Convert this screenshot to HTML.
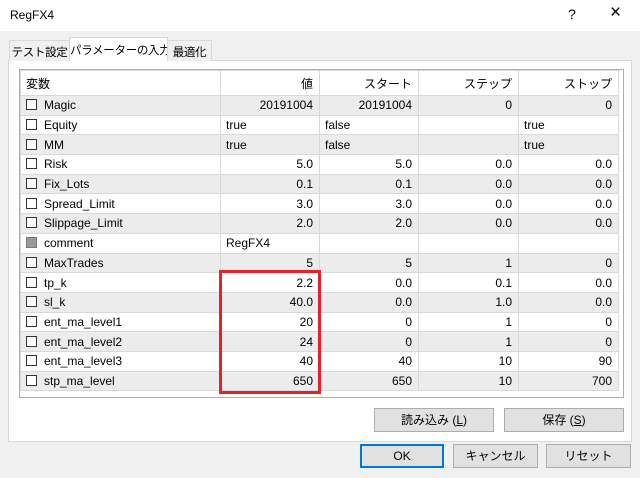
<!DOCTYPE html>
<html><head><meta charset="utf-8"><style>
*{box-sizing:border-box;margin:0;padding:0}
body{width:640px;height:478px;overflow:hidden;background:#f0f0f0;font-family:"Liberation Sans","Noto Sans CJK JP",sans-serif;font-size:12px;color:#000;position:relative}
.abs{position:absolute}
.title{left:0;top:0;width:640px;height:31px;background:#fff}
.tab{top:40px;height:21px;border:1px solid #d9d9d9;border-bottom:none;background:#f0f0f0;padding:3px 0;font-size:11.5px;white-space:nowrap;text-align:center;overflow:hidden;letter-spacing:-0.3px}
.panel{left:8px;top:60px;width:624px;height:382px;background:#fff;border:1px solid #d9d9d9}
table{border-collapse:collapse;table-layout:fixed}
td{height:19.7px;border:1px solid #d9d9d9;padding:0 6px 0 5px;white-space:nowrap;overflow:hidden;font-size:12px}
tr.g td{background:#ececec}
tr.h td{height:25px;background:#fff}
.r{text-align:right}
.cb{display:inline-block;width:11px;height:11px;border:1px solid #333;background:#fff;vertical-align:-1px;margin-right:7px}
.btn{height:24px;border:1px solid #adadad;background:#e1e1e1;text-align:center;line-height:22px;font-size:12px}
</style></head><body>
<div class="abs title"></div>
<div class="abs" style="left:10px;top:8px;font-size:12px">RegFX4</div>
<div class="abs" style="left:568px;top:6px;font-size:14px">?</div>
<div class="abs" style="left:610px;top:2px;font-size:19px">×</div>
<div class="abs panel"></div>
<div class="abs tab" style="left:9px;width:61px">テスト設定</div>
<div class="abs tab" style="left:69px;top:37px;width:99px;height:24px;background:#fff;padding-top:4px">パラメーターの入力</div>
<div class="abs tab" style="left:167px;width:45px">最適化</div>
<div class="abs" style="left:19px;top:69px;width:605px;height:329px;border:1px solid #adadad;background:#fff;overflow:hidden">
<table style="width:598px">
<colgroup><col style="width:200px"><col style="width:99px"><col style="width:99px"><col style="width:100px"><col style="width:100px"></colgroup>
<tr class="h"><td>変数</td><td class="r">値</td><td class="r">スタート</td><td class="r">ステップ</td><td class="r">ストップ</td></tr>
<tr class="g"><td><span class="cb"></span>Magic</td><td class="r">20191004</td><td class="r">20191004</td><td class="r">0</td><td class="r">0</td></tr>
<tr><td><span class="cb"></span>Equity</td><td>true</td><td>false</td><td></td><td>true</td></tr>
<tr class="g"><td><span class="cb"></span>MM</td><td>true</td><td>false</td><td></td><td>true</td></tr>
<tr><td><span class="cb"></span>Risk</td><td class="r">5.0</td><td class="r">5.0</td><td class="r">0.0</td><td class="r">0.0</td></tr>
<tr class="g"><td><span class="cb"></span>Fix_Lots</td><td class="r">0.1</td><td class="r">0.1</td><td class="r">0.0</td><td class="r">0.0</td></tr>
<tr><td><span class="cb"></span>Spread_Limit</td><td class="r">3.0</td><td class="r">3.0</td><td class="r">0.0</td><td class="r">0.0</td></tr>
<tr class="g"><td><span class="cb"></span>Slippage_Limit</td><td class="r">2.0</td><td class="r">2.0</td><td class="r">0.0</td><td class="r">0.0</td></tr>
<tr><td><span class="cb" style="background:#999;border-color:#777"></span>comment</td><td>RegFX4</td><td></td><td></td><td></td></tr>
<tr class="g"><td><span class="cb"></span>MaxTrades</td><td class="r">5</td><td class="r">5</td><td class="r">1</td><td class="r">0</td></tr>
<tr><td><span class="cb"></span>tp_k</td><td class="r">2.2</td><td class="r">0.0</td><td class="r">0.1</td><td class="r">0.0</td></tr>
<tr class="g"><td><span class="cb"></span>sl_k</td><td class="r">40.0</td><td class="r">0.0</td><td class="r">1.0</td><td class="r">0.0</td></tr>
<tr><td><span class="cb"></span>ent_ma_level1</td><td class="r">20</td><td class="r">0</td><td class="r">1</td><td class="r">0</td></tr>
<tr class="g"><td><span class="cb"></span>ent_ma_level2</td><td class="r">24</td><td class="r">0</td><td class="r">1</td><td class="r">0</td></tr>
<tr><td><span class="cb"></span>ent_ma_level3</td><td class="r">40</td><td class="r">40</td><td class="r">10</td><td class="r">90</td></tr>
<tr class="g"><td><span class="cb"></span>stp_ma_level</td><td class="r">650</td><td class="r">650</td><td class="r">10</td><td class="r">700</td></tr>
</table></div>
<div class="abs" style="left:219px;top:270px;width:102px;height:124px;border:3px solid #e8202a"></div>
<div class="abs btn" style="left:374px;top:408px;width:120px">読み込み (<u>L</u>)</div>
<div class="abs btn" style="left:504px;top:408px;width:120px">保存 (<u>S</u>)</div>
<div class="abs btn" style="left:360px;top:444px;width:84px;border:2px solid #0078d7;line-height:20px">OK</div>
<div class="abs btn" style="left:453px;top:444px;width:85px">キャンセル</div>
<div class="abs btn" style="left:546px;top:444px;width:85px">リセット</div>
</body></html>
